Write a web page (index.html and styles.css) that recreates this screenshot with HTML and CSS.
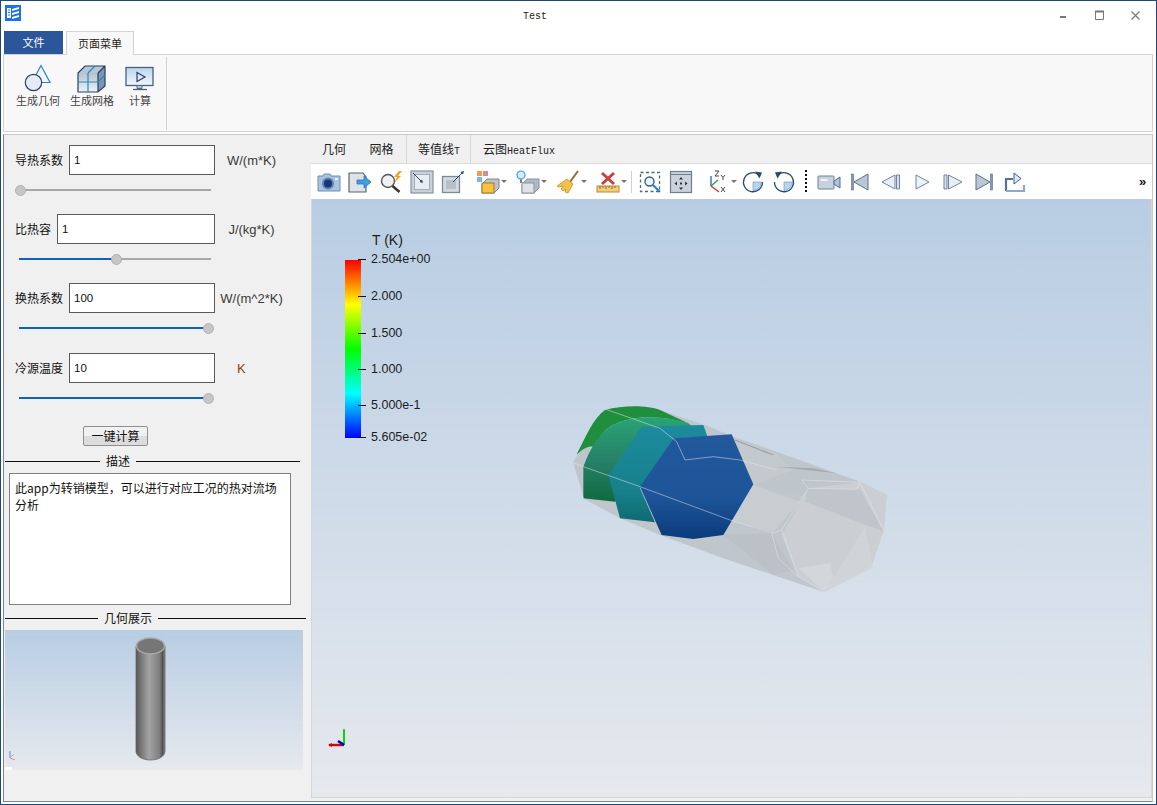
FILE: index.html
```html
<!DOCTYPE html>
<html lang="zh-CN">
<head>
<meta charset="utf-8">
<title>Test</title>
<link rel="stylesheet" href="styles.css">
</head>
<body>
<div class="window">
  <header class="titlebar">
    <svg class="app-icon" width="16" height="16" viewBox="0 0 16 16"><rect width="16" height="16" fill="#1a73e8"/><path d="M2 3h4v10H2z" fill="#fff"/><path d="M3 5h2M3 7.500h2M3 10h2" stroke="#1a73e8"/><path d="M7 4l7-2v2l-7 2zM7 8l7-2v2l-7 2zM7 12l7-2v2l-7 2z" fill="#fff"/></svg>
    <div class="title">Test</div>
    <div class="win-btns">
      <div class="win-btn"><svg width="12" height="12" viewBox="0 0 12 12"><rect x="2" y="6" width="6" height="2" fill="#777"/></svg></div>
      <div class="win-btn"><svg width="12" height="12" viewBox="0 0 12 12"><path d="M1.500 1.500h8v8h-8z" fill="none" stroke="#777"/><path d="M1 1.500h9" stroke="#777" stroke-width="2"/></svg></div>
      <div class="win-btn"><svg width="12" height="12" viewBox="0 0 12 12"><path d="M1.500 1.500l8 8M9.500 1.500l-8 8" stroke="#777" stroke-width="1.200"/></svg></div>
    </div>
  </header>

  <nav class="ribbon-tabs">
    <div class="file-tab">文件</div>
    <div class="page-tab">页面菜单</div>
  </nav>

  <section class="ribbon">
    <div class="ribbon-group">
      <div class="ribbon-btn">
        <svg width="32" height="28" viewBox="0 0 32 28"><path d="M19 1l9 17H10z" fill="#eef5fb" stroke="#2a86c0" stroke-width="1.200"/><circle cx="11.500" cy="18" r="8.200" fill="#e6ebf3" stroke="#2e3f63" stroke-width="1.200"/></svg>
        <span>生成几何</span>
      </div>
      <div class="ribbon-btn">
        <svg width="32" height="29" viewBox="0 0 32 29"><defs><linearGradient id="mesh" x1="0" y1="0" x2="0" y2="1"><stop offset="0" stop-color="#9fb0c2"/><stop offset="1" stop-color="#eef2f6"/></linearGradient></defs><path d="M2 9l7-7h20v20l-7 6H2z" fill="url(#mesh)"/><path d="M9 2h20l-7 7H2z" fill="#b7c6d5"/><path d="M22 9l7-7v20l-7 6z" fill="#7f95ad"/><path d="M2 9l7-7h20v20l-7 6H2zM22 9v19M22 9l7-7" fill="none" stroke="#25406d" stroke-width="1.200"/><path d="M2 18h20l7-7M12 9v19M12 9l7-7" fill="none" stroke="#2a86c0" stroke-width="1.200"/></svg>
        <span>生成网格</span>
      </div>
      <div class="ribbon-btn calc">
        <svg width="30" height="26" viewBox="0 0 30 26"><defs><linearGradient id="scr" x1="0" y1="0" x2="0" y2="1"><stop offset="0" stop-color="#b9d5ee"/><stop offset="1" stop-color="#f3f7fb"/></linearGradient></defs><rect x="1" y="2" width="27" height="18" fill="url(#scr)" stroke="#4a5f80" stroke-width="1.300"/><path d="M12 7l8 4.500-8 4.500z" fill="none" stroke="#2e3f63" stroke-width="1.200"/><path d="M12 20h5v3h-5z" fill="#b8c2cf" stroke="#5a6b85"/><path d="M8 24h14" stroke="#4a5f80" stroke-width="1.300"/></svg>
        <span>计算</span>
      </div>
    </div>
  </section>

  <main class="main">
    <aside class="left">
      <div class="form">
        <div class="field">
          <div class="field-row"><label class="f-label">导热系数</label><div class="input">1</div><div class="unit">W/(m*K)</div></div>
          <div class="slider first"><div class="track"><div class="fill" style="width:0"></div><div class="thumb" style="left:5px"></div></div></div>
        </div>
        <div class="field">
          <div class="field-row"><label class="f-label">比热容</label><div class="input wide">1</div><div class="unit">J/(kg*K)</div></div>
          <div class="slider"><div class="track"><div class="fill" style="width:97px"></div><div class="thumb" style="left:97px"></div></div></div>
        </div>
        <div class="field">
          <div class="field-row"><label class="f-label">换热系数</label><div class="input">100</div><div class="unit">W/(m^2*K)</div></div>
          <div class="slider"><div class="track"><div class="fill" style="width:189px"></div><div class="thumb" style="left:189px"></div></div></div>
        </div>
        <div class="field">
          <div class="field-row"><label class="f-label">冷源温度</label><div class="input">10</div><div class="unit unit-k">K</div></div>
          <div class="slider"><div class="track"><div class="fill" style="width:189px"></div><div class="thumb" style="left:189px"></div></div></div>
        </div>
        <div class="btn-row"><div class="btn">一键计算</div></div>
      </div>

      <div class="section sec-desc"><i class="rule lead"></i><span>描述</span><i class="rule"></i></div>
      <div class="desc">此app为转销模型，可以进行对应工况的热对流场分析</div>
      <div class="section sec-geo"><i class="rule lead"></i><span>几何展示</span><i class="rule"></i></div>
      <div class="mini-view">
        <svg class="cyl" width="31" height="124" viewBox="0 0 31 124">
          <defs><linearGradient id="cy" x1="0" y1="0" x2="1" y2="0"><stop offset="0" stop-color="#555"/><stop offset=".12" stop-color="#6e6e6e"/><stop offset=".45" stop-color="#a4a4a4"/><stop offset=".82" stop-color="#7d7d7d"/><stop offset=".92" stop-color="#505050"/><stop offset="1" stop-color="#8a8a8a"/></linearGradient></defs>
          <path d="M1 9v105c0 5 6 9 14.500 9s14.500-4 14.500-9V9z" fill="url(#cy)" stroke="#666" stroke-width=".8"/>
          <ellipse cx="15.500" cy="9" rx="14" ry="8" fill="#767676" stroke="#a8a8a8" stroke-width="1.400"/>
        </svg>
        <svg class="mini-axes" width="8" height="10" viewBox="0 0 8 10"><path d="M2 8V1" stroke="#7a7ae0"/><path d="M2 8l4-4" stroke="#8cd08c"/><path d="M2 8l5 2" stroke="#e08c8c"/></svg>
        <div class="mini-corner"></div>
      </div>
    </aside>

    <div class="right">
      <div class="view-tabs">
        <div class="v-tab plain">几何</div>
        <div class="v-tab plain">网格</div>
        <div class="v-tab sep-l sep-r">等值线<span class="mono">T</span></div>
        <div class="v-tab last">云图<span class="mono">HeatFlux</span></div>
      </div>

      <div class="toolbar">
        <div class="tool"><svg width="24" height="24" viewBox="0 0 24 24"><path d="M1 6h5l1-2h6l1 2h9v15H1z" fill="#a9c3e0" stroke="#6f8db0"/><circle cx="11" cy="13.500" r="6" fill="#5f83b0"/><circle cx="11" cy="13.500" r="4" fill="#123a75"/><rect x="18" y="8" width="3" height="2" fill="#eef"/></svg></div>
        <div class="tool"><svg width="24" height="24" viewBox="0 0 24 24"><path d="M1 3h14l3 4v15H1z" fill="#dfe3e8" stroke="#59626e" stroke-width="1.200"/><path d="M9 10h7V6l7 6-7 6v-4H9z" fill="#3f9de0" stroke="#2a76b8" stroke-width=".8"/></svg></div>
        <div class="tool"><svg width="24" height="24" viewBox="0 0 24 24"><circle cx="9" cy="11" r="6.500" fill="#eef2f6" stroke="#555" stroke-width="1.400"/><path d="M13.500 16l7 6" stroke="#333" stroke-width="2.400"/><path d="M20 1l-5 6h3l-3 6 7-7h-3l4-5z" fill="#f3a01f"/></svg></div>
        <div class="tool"><svg width="24" height="24" viewBox="0 0 24 24"><rect x="1" y="1" width="22" height="22" fill="#c9d0d9" stroke="#8493a5" stroke-width="1.200"/><rect x="4.500" y="4.500" width="15" height="15" fill="#e9edf1" stroke="#a3aebb"/><path d="M3 3l9 9" stroke="#2d4468" stroke-width="1"/><path d="M13 13l-3.500-1 2.500-2.500z" fill="#2d4468"/></svg></div>
        <div class="tool"><svg width="24" height="24" viewBox="0 0 24 24"><rect x="1.500" y="6.500" width="17" height="16" fill="#d4d9df" stroke="#7c8a9a" stroke-width="1.300"/><rect x="5" y="10" width="10" height="9" fill="#b6bfca"/><path d="M12 12l10-10" stroke="#2d4468" stroke-width="1"/><path d="M23 1l-1 3.500-2.500-2.500z" fill="#2d4468"/></svg></div>
        <div class="tool drop"><svg width="24" height="24" viewBox="0 0 24 24"><rect x="1" y="1" width="5" height="5" fill="#e8a24a"/><rect x="7" y="1" width="5" height="5" fill="#d98c90"/><rect x="1" y="7" width="5" height="5" fill="#79b6e8"/><path d="M6 14l5-5h12v9l-5 5H6z" fill="#bcc3cc" stroke="#7b8696"/><rect x="6" y="13" width="12" height="10" fill="#f7c23f" stroke="#a77b20"/></svg><i class="caret"></i></div>
        <div class="tool drop"><svg width="24" height="24" viewBox="0 0 24 24"><circle cx="5" cy="5" r="4" fill="#d2ecff" stroke="#3d9ad6" stroke-width="1.200"/><path d="M4 9h2v4H4z" fill="#7a8696"/><path d="M6 14l5-5h12v9l-5 5H6z" fill="#b2b9c2" stroke="#8a94a2"/><rect x="6" y="13" width="12" height="10" fill="#dfe3e8" stroke="#8a94a2"/></svg><i class="caret"></i></div>
        <div class="tool drop"><svg width="24" height="24" viewBox="0 0 24 24"><path d="M22 1l-8 11" stroke="#9a6a2c" stroke-width="2"/><path d="M11 9l6 5-5 9-3-1 1-3-3 2-2-2 2-3-5 1-1-1z" fill="#f2c14e" stroke="#c8932a" stroke-width=".8"/></svg><i class="caret"></i></div>
        <div class="tool drop"><svg width="24" height="24" viewBox="0 0 24 24"><path d="M6 3l12 11M18 3L6 14" stroke="#c8423c" stroke-width="3"/><rect x="1" y="16" width="22" height="6" fill="#f3cd7a" stroke="#b48a3a"/><path d="M4 16v3M7 16v2M10 16v3M13 16v2M16 16v3M19 16v2" stroke="#8a6a2c"/></svg><i class="caret"></i></div>
        <i class="tool-sep"></i>
        <div class="tool"><svg width="24" height="24" viewBox="0 0 24 24"><rect x="2.500" y="2.500" width="19" height="19" fill="none" stroke="#56647a" stroke-width="1.300" stroke-dasharray="3 2.500"/><circle cx="11.500" cy="11.500" r="4.500" fill="#eef4fa" stroke="#31608f" stroke-width="1.400"/><path d="M15 15l7 7" stroke="#2f7fc0" stroke-width="2.200"/></svg></div>
        <div class="tool"><svg width="24" height="24" viewBox="0 0 24 24"><rect x="1.500" y="1.500" width="21" height="21" fill="#ccd2da" stroke="#6f7d90" stroke-width="1.200"/><path d="M1.500 4.500h21" stroke="#6f7d90"/><path d="M12 7l-2 2.500h4zM12 20l-2-2.500h4zM5.500 13.500L8 11.500v4zM18.500 13.500L16 11.500v4z" fill="#26364f"/><rect x="11" y="12.500" width="2" height="2" fill="#26364f"/></svg></div>
        <div class="tool drop axis"><svg width="24" height="24" viewBox="0 0 24 24"><path d="M5 16V6" stroke="#2b6fd0" stroke-width="1.400"/><path d="M5 16l7-6" stroke="#2ca04a" stroke-width="1.400"/><path d="M5 16l8 6" stroke="#d8302c" stroke-width="1.400"/><path d="M9 1h4l-4 5h4M15 5l2 2.500 2-2.500M17 7.500V10M15 17l4 5M19 17l-4 5" fill="none" stroke="#444"/></svg><i class="caret"></i></div>
        <div class="tool"><svg width="24" height="24" viewBox="0 0 24 24"><path d="M12 12h8.500a9 9 0 0 1-8.500 8.500z" fill="#b5d6f2" stroke="#6f8fb0" stroke-width=".6"/><path d="M17.500 4.500a9.500 9.500 0 1 0 4 7.500" fill="none" stroke="#2b4a72" stroke-width="1.300"/><path d="M14 1.500l7 1-2.500 6z" fill="#2b4a72"/></svg></div>
        <div class="tool"><svg width="24" height="24" viewBox="0 0 24 24"><path d="M12 12h8.500a9 9 0 0 1-8.500 8.500z" fill="#b5d6f2" stroke="#6f8fb0" stroke-width=".6"/><path d="M6.500 4.500a9.500 9.500 0 1 1-4 7.500" fill="none" stroke="#2b4a72" stroke-width="1.300"/><path d="M10 1.500l-7 1 2.500 6z" fill="#2b4a72"/></svg></div>
        <i class="tool-dots"></i>
        <div class="tool"><svg width="24" height="24" viewBox="0 0 24 24"><rect x="1" y="6" width="16" height="13" rx="1" fill="#c7d2df" stroke="#6e8199"/><rect x="3.500" y="9" width="7" height="2" fill="#f0f3f7"/><path d="M17 11l6-4v11l-6-4z" fill="#a9c3e0" stroke="#4f6b8e"/></svg></div>
        <div class="tool"><svg width="24" height="24" viewBox="0 0 24 24"><rect x="3.500" y="4" width="2" height="16" fill="#8498b2" stroke="#59718f" stroke-width=".6"/><path d="M20 4v16L6 12z" fill="#bcc7d4" stroke="#59718f"/></svg></div>
        <div class="tool"><svg width="24" height="24" viewBox="0 0 24 24"><path d="M16 5v14L3 12z" fill="#e9eef4" stroke="#6d85a3"/><path d="M17.500 5h3v14h-3z" fill="#d8dfe8" stroke="#6d85a3"/></svg></div>
        <div class="tool"><svg width="24" height="24" viewBox="0 0 24 24"><path d="M6 5l13 7-13 7z" fill="#eef2f7" stroke="#6d85a3"/></svg></div>
        <div class="tool"><svg width="24" height="24" viewBox="0 0 24 24"><path d="M3 5h3v14H3z" fill="#d8dfe8" stroke="#6d85a3"/><path d="M7.500 5L21 12 7.500 19z" fill="#e9eef4" stroke="#6d85a3"/></svg></div>
        <div class="tool"><svg width="24" height="24" viewBox="0 0 24 24"><path d="M4 4v16l14-8z" fill="#bcc7d4" stroke="#59718f"/><rect x="18.500" y="4" width="2" height="16" fill="#8498b2" stroke="#59718f" stroke-width=".6"/></svg></div>
        <div class="tool"><svg width="24" height="24" viewBox="0 0 24 24"><path d="M3 21V9h7" fill="none" stroke="#55739a" stroke-width="2.200"/><path d="M3 21h18v-6" fill="none" stroke="#8ea8c6" stroke-width="2.200"/><path d="M11 3l7 5.500-7 5.500z" fill="#dfe8f2" stroke="#3f5f88"/></svg></div>
        <div class="more">»</div>
      </div>

      <div class="viewport">
        <div class="legend">
          <div class="legend-title">T (K)</div>
          <div class="bar"></div>
          <div class="tick t1"><i></i><span>2.504e+00</span></div>
          <div class="tick t2"><i></i><span>2.000</span></div>
          <div class="tick t3"><i></i><span>1.500</span></div>
          <div class="tick t4"><i></i><span>1.000</span></div>
          <div class="tick t5"><i></i><span>5.000e-1</span></div>
          <div class="tick t6"><i></i><span>5.605e-02</span></div>
        </div>

        <svg class="model" width="340" height="205" viewBox="0 0 1020 615">
          <defs>
            <linearGradient id="gr" x1="0" y1="0" x2="0" y2="1"><stop offset="0" stop-color="#2aa376"/><stop offset=".55" stop-color="#257f66"/><stop offset="1" stop-color="#0f6a40"/></linearGradient>
            <linearGradient id="te" x1="0" y1="0" x2="0" y2="1"><stop offset="0" stop-color="#1c8b9e"/><stop offset=".7" stop-color="#17808a"/><stop offset="1" stop-color="#0e6a70"/></linearGradient>
            <linearGradient id="bl" x1="0" y1="0" x2="0" y2="1"><stop offset="0" stop-color="#22589c"/><stop offset=".6" stop-color="#1d5598"/><stop offset="1" stop-color="#0b3b7c"/></linearGradient>
          </defs>
          <path d="M38 203L135 42 300 45 440 92 520 125 650 170 900 260 980 300 970 410 935 520 795 592 640 540 490 490 300 420 180 370 70 310z" fill="#bdc3c9" fill-opacity=".9"/>
          <path d="M520 125L650 178 700 225 580 270z" fill="#c4c9ce"/>
          <path d="M525 135L640 180" stroke="#9ba1a7" stroke-width="4" fill="none"/>
          <path d="M650 215L830 235 760 220z" fill="#a3a9af"/>
          <path d="M580 270L720 320 635 415 510 375z" fill="#c8cdd2"/>
          <path d="M490 420L635 415 700 525 640 540z" fill="#bcc1c7"/>
          <path d="M745 280L900 262 980 300 972 410 935 520 795 592 715 545 665 420z" fill="#cbcfd4"/>
          <path d="M745 280L900 283 972 410 735 320z" fill="#bfc5ca"/>
          <path d="M715 520L810 505 820 550 795 592z" fill="#d3d6da"/>
          <path d="M820 550L915 395 940 520 795 592z" fill="#d0d3d7"/>
          <path d="M50 178C80 120 100 70 135 45C190 30 260 30 300 45L385 85C300 60 220 60 160 90C120 110 110 150 100 155C80 150 60 170 50 178z" fill="#1f8f3e"/>
          <path d="M70 215C90 160 120 110 160 90C220 60 310 60 385 85L440 125 340 130 240 270 165 320 70 310z" fill="url(#gr)"/>
          <path d="M145 240L245 95 430 90 442 124 340 130 240 280 285 382 180 370z" fill="url(#te)"/>
          <path d="M240 275L340 130 515 118 580 268 490 420 400 432 305 420z" fill="url(#bl)"/>
          <path d="M38 203L70 310M38 203L70 215 240 275 510 375 575 395M135 42L300 100 350 140 375 195 460 185 540 195 650 225M725 255L745 280 890 283 900 262 725 255M745 280L665 405 715 545 795 592 935 520 972 410 900 262M635 415L665 405M635 415L655 490 715 545" fill="none" stroke="#e6e9ec" stroke-width="2" opacity=".75"/>
        </svg>

        <svg class="axes" width="22" height="22" viewBox="0 0 22 22"><path d="M18 19V4" stroke="#00e000" stroke-width="2"/><path d="M18 19H3" stroke="#e00000" stroke-width="2.400"/><path d="M18 19l-6-4" stroke="#0000e0" stroke-width="2.600"/><path d="M2 19l4-2v4z" fill="#e00000"/><path d="M17 5l1-3 1 3z" fill="#00c000"/></svg>
      </div>
    </div>
  </main>
</div>
</body>
</html>
```
FILE: styles.css
```css
* { box-sizing: border-box; }
html, body { margin: 0; padding: 0; }
body {
  width: 1157px;
  height: 805px;
  overflow: hidden;
  font-family: "Noto Sans CJK SC", "Liberation Sans", sans-serif;
  font-size: 12px;
  color: #111;
  background: #fff;
}
.window {
  width: 1157px;
  height: 805px;
  display: flex;
  flex-direction: column;
  border: 1px solid #1f4679;
  background: #fff;
}

/* title bar */
.titlebar { height: 30px; display: flex; align-items: flex-start; flex: none; }
.app-icon { margin: 4px 3px 0 4px; flex: none; }
.title {
  flex: 1;
  text-align: center;
  font-family: "Liberation Mono", monospace;
  font-size: 10px;
  line-height: 30px;
  padding-top: 1px;
  color: #222;
}
.win-btns { display: flex; margin-right: 2px; padding-top: 8px; }
.win-btn { width: 36px; height: 14px; display: flex; justify-content: center; align-items: center; }

/* ribbon */
.ribbon-tabs { height: 23px; flex: none; display: flex; padding-left: 3px; gap: 3px; position: relative; z-index: 1; font-size: 11px; }
.file-tab {
  width: 59px;
  background: #2b579a;
  color: #fff;
  text-align: center;
  line-height: 23px;
}
.page-tab {
  width: 68px;
  height: 24px;
  background: #f8f8f8;
  border: 1px solid #d2d2d2;
  border-bottom: none;
  text-align: center;
  line-height: 23px;
  color: #222;
}
.ribbon {
  height: 78px;
  flex: none;
  margin: 0 3px 0 2px;
  background: #f8f8f8;
  border: 1px solid #d2d2d2;
  padding-top: 2px;
}
.ribbon-group {
  width: 163px;
  height: 73px;
  display: flex;
  border-right: 1px solid #d2d2d2;
  padding-left: 10px;
}
.ribbon-btn { width: 48px; display: flex; flex-direction: column; align-items: center; color: #444; font-size: 11px; padding-top: 7px; margin-right: 6px; }
.ribbon-btn svg { height: 29px; }
.ribbon-btn span { line-height: 14px; white-space: nowrap; }
.ribbon-btn.calc { width: 30px; margin-left: 3px; }

/* main */
.main {
  flex: 1;
  margin: 2px 3px 2px 2px;
  display: flex;
  border: 1px solid #75859a;
  border-top-color: #c8c8c8;
  border-right-color: #c8c8c8;
  background: #f0f0f0;
  min-height: 0;
}
.left { width: 306px; flex: none; padding-left: 1px; }
.form { padding-top: 10px; }
.field { margin-bottom: 19px; }
.field:nth-child(3) { margin-bottom: 20px; }
.field:nth-child(4) { margin-bottom: 23px; }
.field-row { display: flex; height: 30px; align-items: center; padding-left: 10px; }
.f-label { margin-right: 6px; white-space: nowrap; line-height: 16px; color: #111; }
.input {
  flex: none;
  width: 146px;
  height: 30px;
  border: 1px solid #5a5a5a;
  background: #fff;
  padding-left: 4px;
  line-height: 28px;
  font-family: "Liberation Sans", sans-serif;
  font-size: 11.500px;
  color: #111;
}
.input.wide { width: 158px; }
.unit {
  width: 73px;
  text-align: center;
  font-family: "Liberation Sans", sans-serif;
  font-size: 13px;
  color: #3a3a3a;
  white-space: nowrap;
  flex: none;
}
.unit-k { text-align: left; padding-left: 22px; color: #7a4a10; }
.slider { height: 10px; margin-top: 10px; padding-left: 14px; }
.slider.first { padding-left: 10px; }
.track { position: relative; width: 192px; height: 2px; background: #a8a8a8; top: 4px; }
.slider.first .track { width: 196px; }
.fill { height: 2px; background: #0f62b4; }
.thumb {
  position: absolute;
  top: -4px;
  width: 11px;
  height: 11px;
  margin-left: -5px;
  border-radius: 50%;
  background: #c6c6c6;
  border: 1px solid #b2b2b2;
}
.btn-row { padding-left: 78px; }
.btn {
  width: 65px;
  height: 20px;
  border: 1px solid #8f8f8f;
  border-radius: 2px;
  background: linear-gradient(#f1f1f1 0 50%, #dcdcdc 50% 100%);
  text-align: center;
  line-height: 18px;
  color: #111;
}

/* sections */
.section { display: flex; align-items: center; height: 14px; line-height: 14px; color: #111; }
.section span { padding: 0 6px; white-space: nowrap; }
.rule { height: 1px; background: #111; display: block; flex: 1; }
.sec-desc { margin-top: 8px; width: 295px; }
.sec-desc .lead { flex: none; width: 95px; }
.sec-geo { margin-top: 6px; width: 301px; }
.sec-geo .lead { flex: none; width: 93px; }
.desc {
  width: 282px;
  height: 132px;
  margin: 5px 0 6px 4px;
  background: #fff;
  border: 1px solid #808080;
  padding: 5px 5px;
  line-height: 17px;
  color: #111;
}
.mini-view {
  position: relative;
  width: 298px;
  height: 140px;
  margin-top: 5px;
  background: linear-gradient(#b8cde3, #e6e9ee);
}
.cyl { position: absolute; left: 130px; top: 7px; }
.mini-axes { position: absolute; left: 3px; top: 120px; }
.mini-corner { position: absolute; left: 0; bottom: 0; width: 7px; height: 3px; background: #fff; }

/* right */
.right { flex: 1; display: flex; flex-direction: column; min-width: 0; padding-left: 1px; padding-bottom: 3px; }
.view-tabs { height: 28px; flex: none; display: flex; align-items: center; color: #222; }
.v-tab { height: 28px; line-height: 28px; white-space: nowrap; }
.v-tab.plain { padding: 0 11px; text-align: center; }
.v-tab.plain:nth-child(1) { width: 46px; }
.v-tab.plain:nth-child(2) { width: 49px; }
.v-tab.sep-l { border-left: 1px solid #d8d8d8; }
.v-tab.sep-r { border-right: 1px solid #d8d8d8; padding: 0 10px 0 11px; }
.v-tab.last { padding-left: 12px; }
.mono { font-family: "Liberation Mono", monospace; font-size: 10px; }
.toolbar {
  height: 36px;
  flex: none;
  display: flex;
  align-items: center;
  background: #fff;
  border-top: 1px solid #dcdcdc;
  padding-left: 2px;
}
.tool { width: 31px; height: 34px; flex: none; display: flex; align-items: center; justify-content: center; }
.tool.drop { width: 40px; justify-content: flex-start; padding-left: 8px; }
.tool.axis { width: 41px; padding-left: 10px; }
.caret { width: 0; height: 0; border: 3px solid transparent; border-top: 3px solid #777; border-bottom: 0; margin-left: 1px; }
.tool-sep { width: 6px; height: 22px; flex: none; display: flex; background: linear-gradient(#d0d0d0, #d0d0d0) center / 1px 100% no-repeat; }
.tool-dots { width: 14px; height: 24px; flex: none; background: repeating-linear-gradient(#111 0 2px, transparent 2px 4px) center / 2px 100% no-repeat; }
.more { margin-left: auto; margin-right: 3px; width: 10px; font-family: "Liberation Sans", sans-serif; font-size: 13px; font-weight: bold; color: #111; line-height: 34px; }
.viewport {
  position: relative;
  flex: 1;
  min-height: 0;
  background: linear-gradient(#b8cde3, #e6e9ee);
  border: 1px solid #d6d6d6;
  border-top: none;
}

/* legend */
.legend {
  position: absolute;
  left: 33px;
  top: 0;
  font-family: "Liberation Sans", sans-serif;
  color: #1d1d1d;
}
.legend-title { position: absolute; left: 27px; top: 33px; font-size: 14px; line-height: 16px; white-space: nowrap; }
.bar {
  position: absolute;
  left: 0;
  top: 61px;
  width: 16px;
  height: 178px;
  background: linear-gradient(#ff0000, #ffff00 25%, #00ff00 50%, #00ffff 75%, #0000ff);
}
.tick { position: absolute; left: 13px; display: flex; align-items: center; height: 14px; font-size: 12.500px; white-space: nowrap; }
.tick i { width: 8px; height: 1px; background: #111; margin-right: 5px; }
.t1 { top: 53px; }
.t2 { top: 90px; }
.t3 { top: 127px; }
.t4 { top: 163px; }
.t5 { top: 199px; }
.t6 { top: 231px; }

.model { position: absolute; left: 248px; top: 196px; }
.axes { position: absolute; left: 14px; top: 527px; }
```
